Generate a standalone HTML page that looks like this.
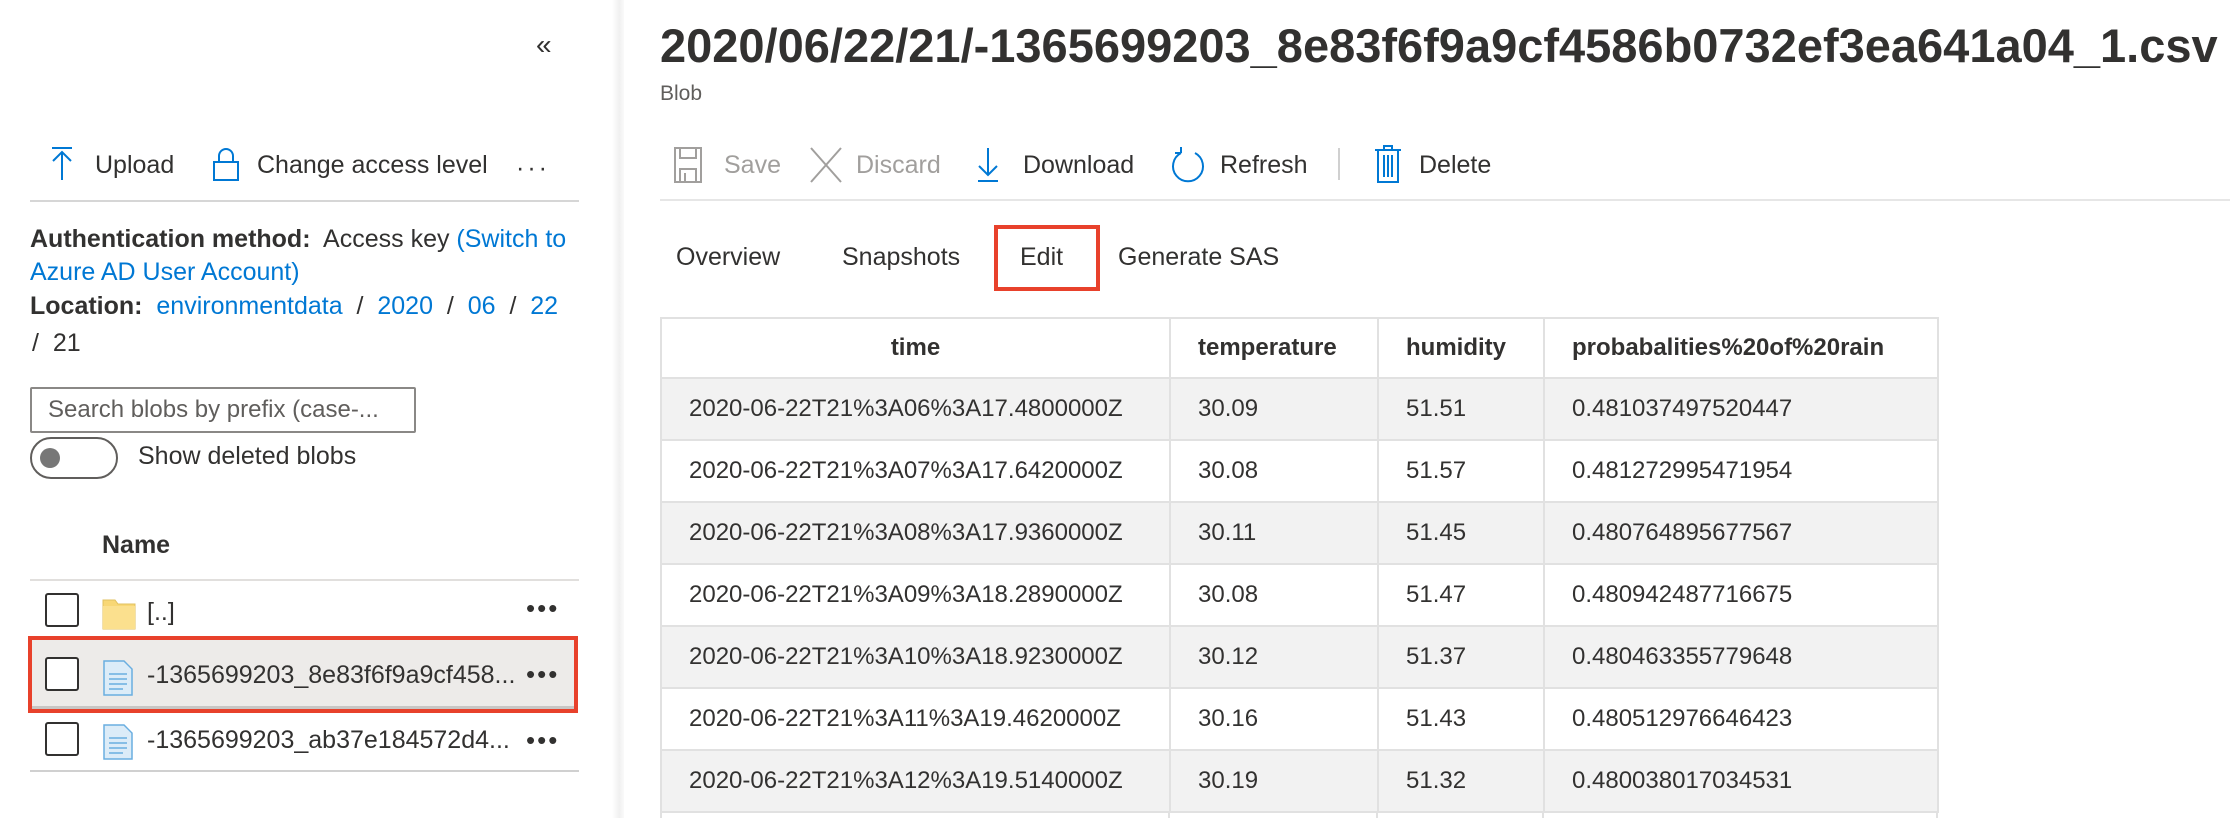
<!DOCTYPE html>
<html style="overflow:hidden;width:2230px;height:818px"><head><meta charset="utf-8"><style>
*{margin:0;padding:0;box-sizing:border-box}
body{width:2230px;height:818px;overflow:hidden;background:#fff;font-family:"Liberation Sans",sans-serif;color:#323130;position:relative}
.a{position:absolute;white-space:nowrap}
.t{position:absolute;white-space:nowrap;font-size:25px;line-height:40px}
.l{color:#0078d4}
.g{color:#a19f9d}
.hr{position:absolute;height:2px;background:#e1dfdd}
.cb{position:absolute;width:34px;height:34px;border:2px solid #323130;border-radius:3px;background:#fff}
.dots{position:absolute;font-size:26px;letter-spacing:2px;line-height:20px}
table{position:absolute;left:660px;top:317px;border-collapse:collapse;font-size:24px}
td,th{border:2px solid #e1e1e1;height:62px;padding:0 0 0 27px;text-align:left;color:#323130}
th{height:60px;font-weight:bold}
tr:nth-child(even) td{background:#f2f2f2}
</style></head><body>
<div class="a" style="left:612px;top:0;width:12px;height:818px;background:linear-gradient(to right,#fff,#f0f0f0 60%,#fafafa)"></div>

<!-- left panel -->
<div class="t" style="left:536px;top:25px;font-size:28px">«</div>
<svg class="a" style="left:50px;top:146px" width="24" height="36" viewBox="0 0 24 36"><path d="M2 2H22M12 6V34M3 15L12 6L21 15" stroke="#0078d4" stroke-width="2" fill="none"/></svg>
<div class="t" style="left:95px;top:145px">Upload</div>
<svg class="a" style="left:212px;top:146px" width="28" height="36" viewBox="0 0 28 36"><path d="M7 16V10a7 7 0 0 1 14 0v6M2 16H26V34H2Z" stroke="#0078d4" stroke-width="2" fill="none"/></svg>
<div class="t" style="left:257px;top:145px">Change access level</div>
<div class="t" style="left:516px;top:148px;letter-spacing:3px">···</div>
<div class="hr" style="left:30px;top:200px;width:549px;background:#d6d6d6"></div>

<div class="t" style="left:30px;top:219px"><b>Authentication method:</b>&nbsp; Access key <span class="l">(Switch to</span></div>
<div class="t l" style="left:30px;top:252px">Azure AD User Account)</div>
<div class="t" style="left:30px;top:286px"><b>Location:</b>&nbsp; <span class="l">environmentdata</span>&nbsp; /&nbsp; <span class="l">2020</span>&nbsp; /&nbsp; <span class="l">06</span>&nbsp; /&nbsp; <span class="l">22</span></div>
<div class="t" style="left:32px;top:323px">/&nbsp; 21</div>

<div class="a" style="left:30px;top:387px;width:386px;height:46px;border:2px solid #8a8886;border-radius:2px"></div>
<div class="t" style="left:48px;top:390px;color:#605e5c;font-size:24px">Search blobs by prefix (case-...</div>
<div class="a" style="left:30px;top:437px;width:88px;height:42px;border:2px solid #605e5c;border-radius:21px"></div>
<div class="a" style="left:40px;top:448px;width:20px;height:20px;border-radius:50%;background:#777"></div>
<div class="t" style="left:138px;top:436px">Show deleted blobs</div>

<div class="t" style="left:102px;top:525px;font-weight:bold">Name</div>
<div class="hr" style="left:30px;top:579px;width:549px"></div>

<div class="cb" style="left:45px;top:593px"></div>
<svg class="a" style="left:102px;top:598px" width="34" height="32" viewBox="0 0 34 32"><path d="M1 2H13L16 6H33V31H1Z" fill="#f8d775" stroke="#e0c060" stroke-width="1"/><path d="M1 8H33V31H1Z" fill="#fbe08e"/></svg>
<div class="t" style="left:147px;top:592px">[..]</div>
<div class="dots" style="left:526px;top:598px">•••</div>

<div class="a" style="left:28px;top:636px;width:550px;height:77px;border:4px solid #e8412b;background:#edebe9"></div>
<div class="a" style="left:32px;top:706px;width:542px;height:3px;background:#c8c6c4"></div>
<div class="cb" style="left:45px;top:657px"></div>
<svg class="a" style="left:103px;top:660px" width="30" height="36" viewBox="0 0 30 36"><path d="M1 1H21L29 9V35H1Z" fill="#dcecf8" stroke="#6aaee0" stroke-width="1.5"/><path d="M6 14H24M6 19H24M6 24H24M6 29H20" stroke="#6aaee0" stroke-width="1.5"/></svg>
<div class="t" style="left:147px;top:655px">-1365699203_8e83f6f9a9cf458...</div>
<div class="dots" style="left:526px;top:664px">•••</div>

<div class="cb" style="left:45px;top:722px"></div>
<svg class="a" style="left:103px;top:724px" width="30" height="36" viewBox="0 0 30 36"><path d="M1 1H21L29 9V35H1Z" fill="#dcecf8" stroke="#6aaee0" stroke-width="1.5"/><path d="M6 14H24M6 19H24M6 24H24M6 29H20" stroke="#6aaee0" stroke-width="1.5"/></svg>
<div class="t" style="left:147px;top:720px">-1365699203_ab37e184572d4...</div>
<div class="dots" style="left:526px;top:730px">•••</div>
<div class="hr" style="left:30px;top:770px;width:549px;background:#d0d0d0"></div>

<!-- right panel -->
<div class="a" style="left:660px;top:18px;font-size:47px;line-height:56px;font-weight:bold;color:#323130">2020/06/22/21/-1365699203_8e83f6f9a9cf4586b0732ef3ea641a04_1.csv</div>
<div class="t" style="left:660px;top:80px;font-size:21px;line-height:28px;color:#605e5c">Blob</div>

<svg class="a" style="left:674px;top:147px" width="28" height="36" viewBox="0 0 28 36"><path d="M1 1H27V35H1ZM6 1V11H22V1M6 35V22H22V35M11 26V35" stroke="#a19f9d" stroke-width="2" fill="none"/></svg>
<div class="t g" style="left:724px;top:145px">Save</div>
<svg class="a" style="left:809px;top:147px" width="34" height="36" viewBox="0 0 34 36"><path d="M2 1L32 35M32 1L2 35" stroke="#a19f9d" stroke-width="2"/></svg>
<div class="t g" style="left:856px;top:145px">Discard</div>
<svg class="a" style="left:976px;top:147px" width="24" height="36" viewBox="0 0 24 36"><path d="M12 1V28M3 19L12 28L21 19M2 34H22" stroke="#0078d4" stroke-width="2" fill="none"/></svg>
<div class="t" style="left:1023px;top:145px">Download</div>
<svg class="a" style="left:1170px;top:147px" width="36" height="38" viewBox="0 0 36 38"><path d="M11 6A15 15 0 1 0 25 6M11 6V0M11 6H5" stroke="#0078d4" stroke-width="2" fill="none"/></svg>
<div class="t" style="left:1220px;top:145px">Refresh</div>
<div class="a" style="left:1338px;top:148px;width:2px;height:32px;background:#d0d0d0"></div>
<svg class="a" style="left:1374px;top:145px" width="28" height="38" viewBox="0 0 28 38"><path d="M1 5H27M10 5V1H18V5M4 5V37H24V5M10 10V32M14 10V32M18 10V32" stroke="#0078d4" stroke-width="2" fill="none"/></svg>
<div class="t" style="left:1419px;top:145px">Delete</div>
<div class="hr" style="left:660px;top:199px;width:1570px;background:#e6e6e6"></div>

<div class="t" style="left:676px;top:237px">Overview</div>
<div class="t" style="left:842px;top:237px">Snapshots</div>
<div class="t" style="left:1020px;top:237px">Edit</div>
<div class="t" style="left:1118px;top:237px">Generate SAS</div>
<div class="a" style="left:1024px;top:288px;width:44px;height:3px;background:#444"></div>
<div class="a" style="left:994px;top:225px;width:106px;height:66px;border:4px solid #e8412b"></div>

<table>
<tr><th style="width:509px;text-align:center;padding:0">time</th><th style="width:208px">temperature</th><th style="width:166px">humidity</th><th style="width:394px">probabalities%20of%20rain</th></tr>
<tr><td>2020-06-22T21%3A06%3A17.4800000Z</td><td>30.09</td><td>51.51</td><td>0.481037497520447</td></tr>
<tr><td>2020-06-22T21%3A07%3A17.6420000Z</td><td>30.08</td><td>51.57</td><td>0.481272995471954</td></tr>
<tr><td>2020-06-22T21%3A08%3A17.9360000Z</td><td>30.11</td><td>51.45</td><td>0.480764895677567</td></tr>
<tr><td>2020-06-22T21%3A09%3A18.2890000Z</td><td>30.08</td><td>51.47</td><td>0.480942487716675</td></tr>
<tr><td>2020-06-22T21%3A10%3A18.9230000Z</td><td>30.12</td><td>51.37</td><td>0.480463355779648</td></tr>
<tr><td>2020-06-22T21%3A11%3A19.4620000Z</td><td>30.16</td><td>51.43</td><td>0.480512976646423</td></tr>
<tr><td>2020-06-22T21%3A12%3A19.5140000Z</td><td>30.19</td><td>51.32</td><td>0.480038017034531</td></tr>
</table>
<div class="a" style="left:660px;top:812px;width:1278px;height:6px;border-left:2px solid #e1e1e1;border-right:2px solid #e1e1e1"></div>
<div class="a" style="left:1168px;top:812px;width:2px;height:6px;background:#e1e1e1"></div>
<div class="a" style="left:1376px;top:812px;width:2px;height:6px;background:#e1e1e1"></div>
<div class="a" style="left:1542px;top:812px;width:2px;height:6px;background:#e1e1e1"></div>
</body></html>
